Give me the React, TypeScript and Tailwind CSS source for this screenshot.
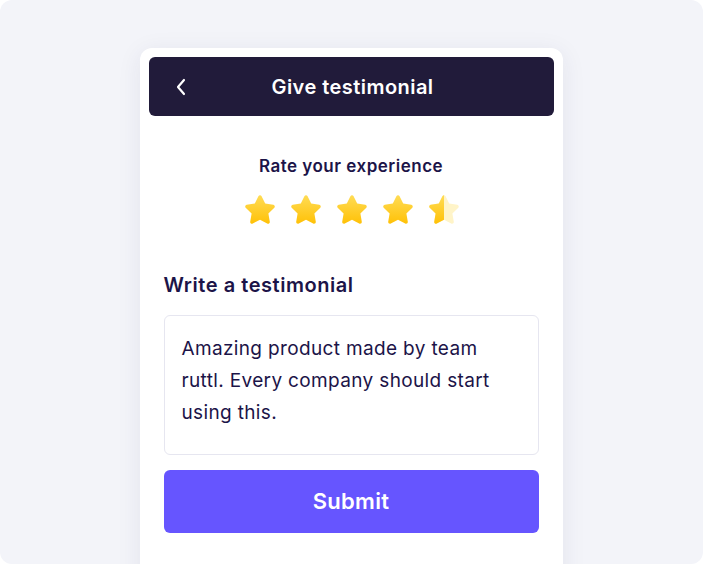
import React from "react";

function Star({ half = false, id }: { half?: boolean; id: string }) {
  const d =
    "M17 2.2c.7 0 1.3.4 1.6 1l3.6 7.4 8.1 1.2c1.4.2 2 2 1 3l-5.9 5.8 1.4 8.1c.2 1.4-1.3 2.5-2.6 1.8L17 26.7l-7.2 3.8c-1.3.7-2.8-.4-2.6-1.8l1.4-8.1-5.9-5.8c-1-1-.4-2.8 1-3l8.1-1.2 3.6-7.4c.3-.6.9-1 1.6-1z";
  return (
    <svg width="34" height="33" viewBox="0 0 34 33">
      <defs>
        <linearGradient id={`g${id}`} x1="0" y1="0" x2="0" y2="1">
          <stop offset="0" stopColor="#ffdc55" />
          <stop offset="1" stopColor="#ffc107" />
        </linearGradient>
        <clipPath id={`c${id}`}>
          <rect x="0" y="0" width="17" height="33" />
        </clipPath>
      </defs>
      {half ? (
        <>
          <path d={d} fill="#fff4c8" />
          <path d={d} fill={`url(#g${id})`} clipPath={`url(#c${id})`} />
        </>
      ) : (
        <path d={d} fill={`url(#g${id})`} />
      )}
    </svg>
  );
}

export default function App() {
  return (
    <div className="w-[703px] h-[564px] bg-white overflow-hidden" style={{ fontFamily: "Inter, 'Noto Sans', sans-serif" }}>
      <div className="w-full h-full rounded-xl bg-[#f3f4f9] flex justify-center pt-[48px] overflow-hidden">
        <div className="w-[423px] h-[540px] bg-white rounded-t-xl shadow-[0_4px_24px_rgba(40,40,90,0.08)] p-[9px] ml-[-1px]">
          <div className="h-[59px] bg-[#211b3a] rounded-md relative flex items-center justify-center">
            <svg className="absolute left-[26px] top-[21px]" width="12" height="18" viewBox="0 0 12 18" fill="none">
              <path d="M9 2 L3 9 L9 16" stroke="white" strokeWidth="2.2" strokeLinecap="round" strokeLinejoin="round" />
            </svg>
            <span className="text-white text-[20px] font-semibold tracking-[0.45px] leading-none ml-[3px]">Give testimonial</span>
          </div>
          <div className="px-[15px]">
            <div className="mt-[42px] text-center text-[17px] font-semibold text-[#1c1448] tracking-[0.5px] leading-none">Rate your experience</div>
            <div className="mt-[18px] flex justify-center gap-[12px] ml-[2px]">
              <Star id="1" />
              <Star id="2" />
              <Star id="3" />
              <Star id="4" />
              <Star id="5" half />
            </div>
            <div className="mt-[49px] text-[20px] font-semibold text-[#1c1448] tracking-[0.55px] leading-none">Write a testimonial</div>
            <div className="mt-[20px] h-[140px] border border-[#e6e6f0] rounded-md px-[17px] pt-[17px] text-[19px] leading-[32px] tracking-[0.35px] text-[#1c1448]">
              Amazing product made by team ruttl. Every company should start using this.
            </div>
            <button className="mt-[15px] w-full h-[63px] rounded-md bg-[#6655ff] text-white text-[22px] font-semibold tracking-[0.3px] flex items-center justify-center">
              Submit
            </button>
          </div>
        </div>
      </div>
    </div>
  );
}
